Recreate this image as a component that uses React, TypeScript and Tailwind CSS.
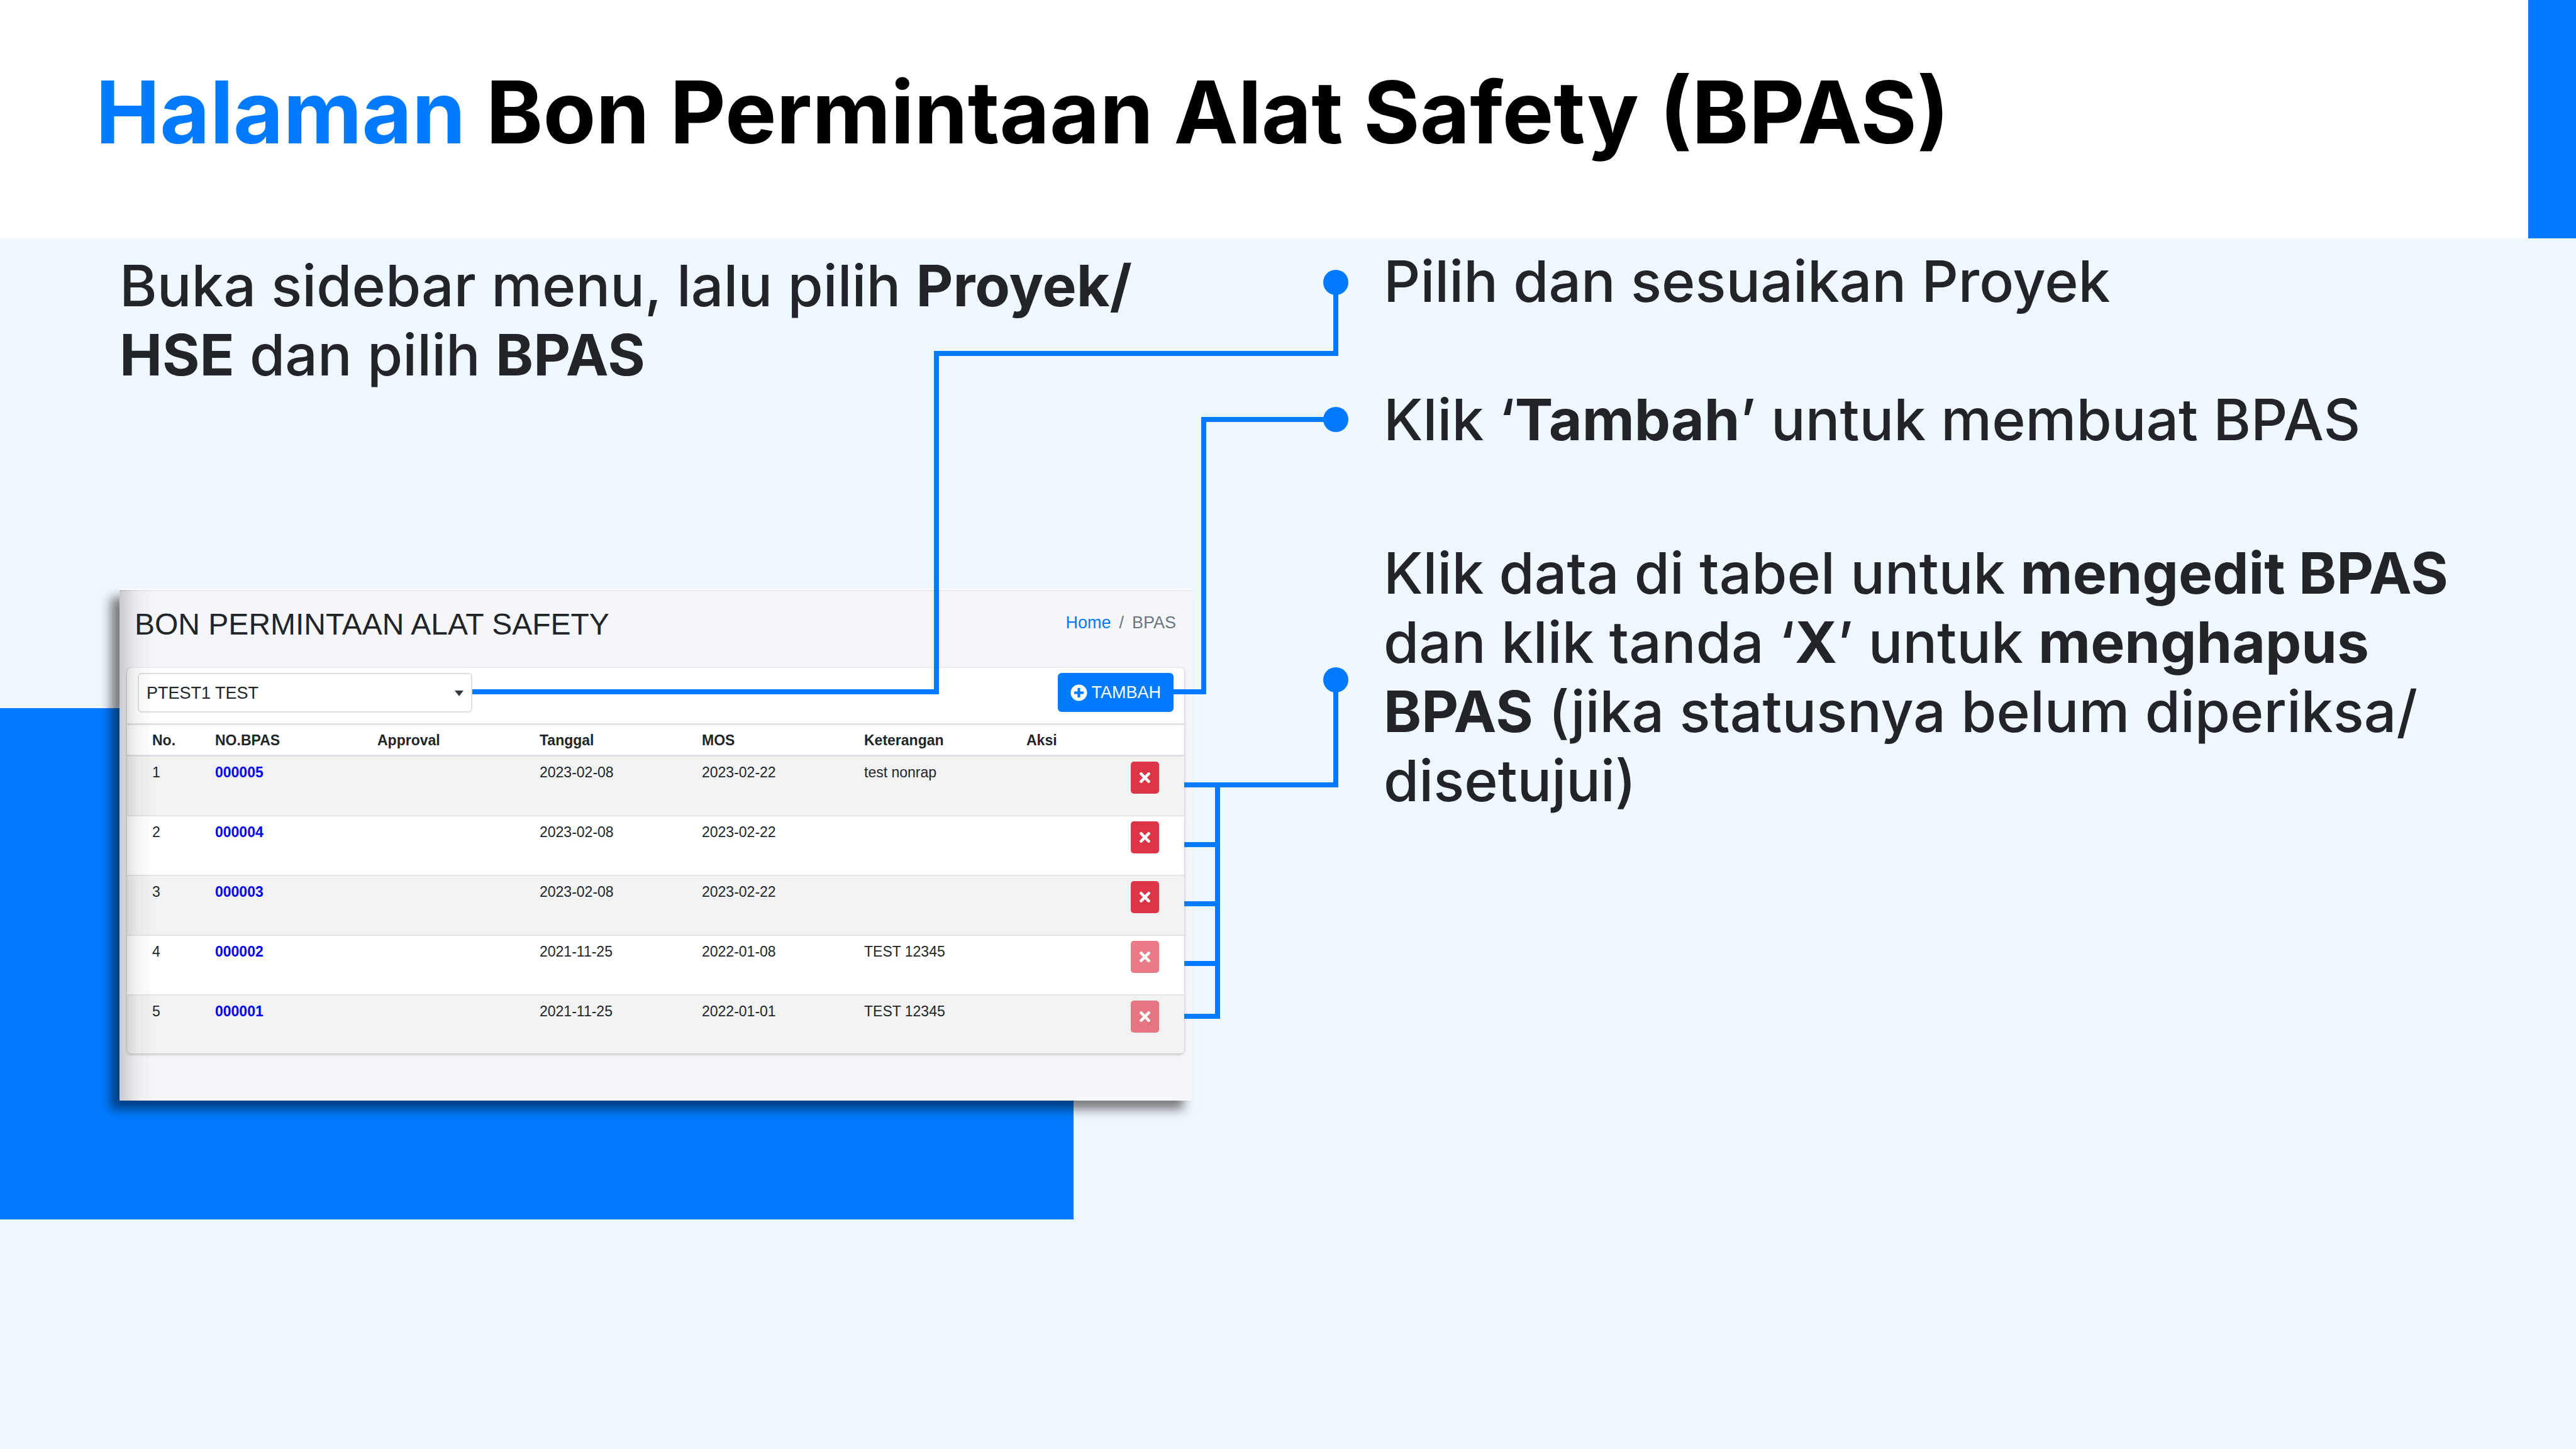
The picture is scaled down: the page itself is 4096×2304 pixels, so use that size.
import { FaPlusCircle, FaTimes } from "react-icons/fa";

type Row = {
  no: number;
  code: string;
  date: string;
  mos: string;
  note: string;
  locked: boolean;
};

const rows: Row[] = [
  { no: 1, code: "000005", date: "2023-02-08", mos: "2023-02-22", note: "test nonrap", locked: false },
  { no: 2, code: "000004", date: "2023-02-08", mos: "2023-02-22", note: "", locked: false },
  { no: 3, code: "000003", date: "2023-02-08", mos: "2023-02-22", note: "", locked: false },
  { no: 4, code: "000002", date: "2021-11-25", mos: "2022-01-08", note: "TEST 12345", locked: true },
  { no: 5, code: "000001", date: "2021-11-25", mos: "2022-01-01", note: "TEST 12345", locked: true },
];

const headings = ["No.", "NO.BPAS", "Approval", "Tanggal", "MOS", "Keterangan", "Aksi"];

function Header() {
  return (
    <header className="flex h-[379px] justify-between bg-white">
      <h1 className="pt-[95px] pl-[152px] text-[137px] leading-[166px] font-bold text-black">
        <span className="text-[#007bff]">Halaman</span> Bon Permintaan Alat Safety (BPAS)
      </h1>
      <div className="w-[76px] shrink-0 bg-[#007bff]" />
    </header>
  );
}

function BpasTable() {
  return (
    <table className="w-full table-fixed border-separate border-spacing-0 text-left text-[23px] leading-[34px]">
      <colgroup>
        <col className="w-[118px]" />
        <col className="w-[258px]" />
        <col className="w-[258px]" />
        <col className="w-[258px]" />
        <col className="w-[258px]" />
        <col className="w-[258px]" />
        <col />
      </colgroup>
      <thead>
        <tr>
          {headings.map((h) => (
            <th
              key={h}
              scope="col"
              className="border-b-[3px] border-[#dee2e6] pt-[7px] pb-[6px] pl-[22px] font-bold first:pl-[40px]"
            >
              {h}
            </th>
          ))}
        </tr>
      </thead>
      <tbody className="[&_td]:border-b-2 [&_td]:border-[#e3e6e9] [&_td]:pt-[8px] [&_td]:pl-[22px] [&_td]:align-top [&_td:first-child]:pl-[40px] [&_tr:last-child_td]:border-b-0">
        {rows.map((r) => (
          <tr key={r.code} className="h-[95px] odd:bg-[#f2f2f2] last:h-[92px]">
            <td>{r.no}</td>
            <td>
              <a href="#" className="font-bold text-[#0000ff]">
                {r.code}
              </a>
            </td>
            <td />
            <td>{r.date}</td>
            <td>{r.mos}</td>
            <td>{r.note}</td>
            <td>
              <button
                type="button"
                aria-label={`Hapus ${r.code}`}
                disabled={r.locked}
                className="mr-[40px] ml-auto flex h-[51px] w-[45px] items-center justify-center rounded-[5px] bg-[#dc3545] text-white disabled:opacity-65"
              >
                <FaTimes className="h-[25px] w-[25px]" />
              </button>
            </td>
          </tr>
        ))}
      </tbody>
    </table>
  );
}

function Panel() {
  return (
    <section className="relative mt-[317px] border-t-2 border-white bg-[#f4f6f9] pb-[75px] font-['Liberation_Sans',sans-serif] text-[27px] leading-[34px] text-[#212529] shadow-[-14px_14px_16px_rgba(0,0,0,0.5)]">
      <div className="flex h-[124px] justify-between border-t-2 border-[#e7e9ed] pr-[26px] pl-[24px]">
        <h2 className="pt-[24px] text-[48px] leading-[58px]">BON PERMINTAAN ALAT SAFETY</h2>
        <nav aria-label="Breadcrumb" className="flex gap-[13px] pt-[30px] leading-[40px]">
          <a href="#" className="text-[#007bff]">
            Home
          </a>
          <span className="text-[#6c757d]">/</span>
          <span className="text-[#6c757d]">BPAS</span>
        </nav>
      </div>
      <div className="mr-[13px] ml-[12px] overflow-hidden rounded-[7px] bg-white shadow-[0_0_2px_rgba(0,0,0,0.125),0_2px_5px_rgba(0,0,0,0.2)]">
        <div className="flex items-start justify-between border-b-[3px] border-[#dee2e6] pt-[8px] pr-[17px] pb-[17px] pl-[17px]">
          <div className="relative w-[532px]">
            <select
              aria-label="Proyek"
              className="block h-[63px] w-full appearance-none rounded-[6px] border-2 border-[#dadfe4] bg-white pl-[12px] text-[#212529]"
            >
              <option>PTEST1 TEST</option>
            </select>
            <svg viewBox="0 0 14 9" className="pointer-events-none absolute top-[28px] right-[14px] h-[9px] w-[14px]" aria-hidden="true">
              <path d="M0 0H14L7 9Z" fill="#343a40" />
            </svg>
          </div>
          <button type="button" className="flex h-[62px] items-center gap-[6px] rounded-[6px] bg-[#007bff] px-[20px] text-white">
            <FaPlusCircle className="h-[27px] w-[27px]" />
            TAMBAH
          </button>
        </div>
        <BpasTable />
      </div>
      <div className="pointer-events-none absolute inset-y-0 left-0 w-[56px] bg-linear-to-r from-black/18 via-black/4 to-transparent" />
    </section>
  );
}

function Connectors() {
  return (
    <svg
      viewBox="0 0 4096 1925"
      preserveAspectRatio="none"
      className="pointer-events-none absolute top-0 left-0 h-[1925px] w-full"
      aria-hidden="true"
    >
      <g fill="none" stroke="#007bff" strokeWidth="8">
        <path d="M751 721H1489V183H2124V70" />
        <path d="M1866 721H1914V288H2124" />
        <path d="M1883 869H2124V702" />
        <path d="M1936 869V1237H1883M1883 964H1936M1883 1058H1936M1883 1153H1936" />
      </g>
      <g fill="#007bff">
        <circle cx="2124" cy="70" r="20" />
        <circle cx="2124" cy="288" r="20" />
        <circle cx="2124" cy="702" r="20" />
      </g>
    </svg>
  );
}

export default function App() {
  return (
    <div className="min-h-screen bg-[#f0f8ff] font-['Inter',sans-serif]">
      <Header />
      <main className="relative grid grid-cols-[2200fr_1896fr] text-[91px] leading-[110px] font-medium text-[#212529]">
        <div className="absolute top-[747px] left-0 h-[813px] w-[1707px] bg-[#007bff]" />
        <div className="relative min-w-0 pt-[20px] pr-[304px] pl-[190px]">
          <p>
            Buka sidebar menu, lalu pilih <b>Proyek/<wbr />HSE</b> dan pilih <b>BPAS</b>
          </p>
          <div className="font-normal">
            <Panel />
          </div>
        </div>
        <div className="min-w-0 pt-[13px] pr-[120px]">
          <p>Pilih dan sesuaikan Proyek</p>
          <p className="mt-[110px]">
            Klik ‘<b>Tambah</b>’ untuk membuat BPAS
          </p>
          <p className="mt-[134px]">
            Klik data di tabel untuk <b>mengedit BPAS</b> dan klik tanda ‘<b>X</b>’ untuk <b>menghapus BPAS</b> (jika
            statusnya belum diperiksa/
            <wbr />
            disetujui)
          </p>
        </div>
        <Connectors />
      </main>
    </div>
  );
}
